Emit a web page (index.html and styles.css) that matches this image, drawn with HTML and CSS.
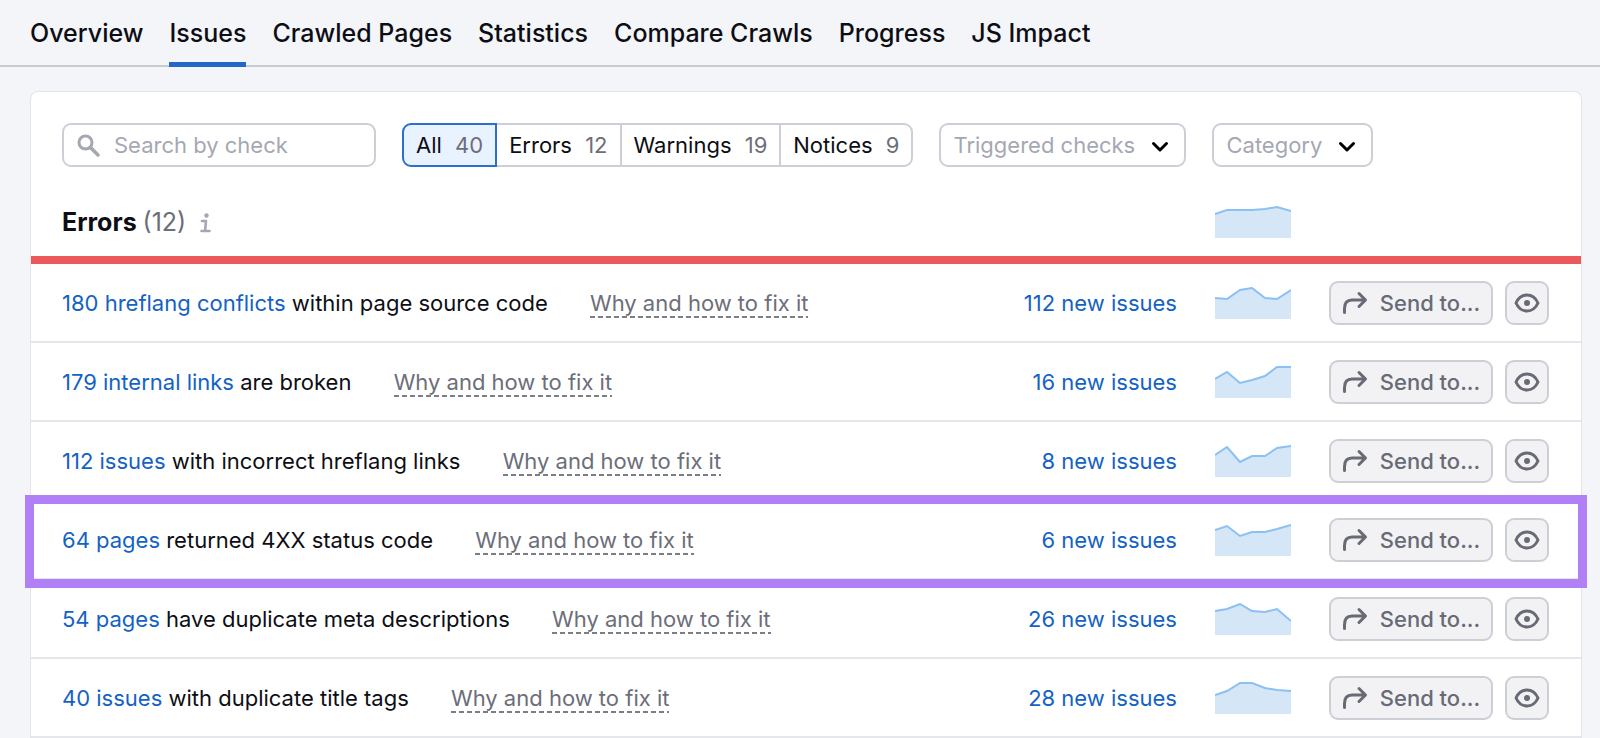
FILE: index.html
```html
<!DOCTYPE html>
<html lang="en">
<head>
    <meta charset="UTF-8">
    <meta name="viewport" content="width=device-width, initial-scale=1.0">
    <title>Site Audit: Issues</title>
    <link rel="stylesheet" href="styles.css">
</head>
<body>
    <!-- Shared icons -->
    <svg class="sprite" aria-hidden="true">
        <symbol id="icon-send" viewBox="0 0 26 24">
            <path d="M2.5 21.5V17.5C2.500 12 5 9 10 9H23M17 2.500L23.500 9L17 15.500" fill="none" stroke="currentColor" stroke-width="3" stroke-linecap="round" stroke-linejoin="round"/>
        </symbol>
        <symbol id="icon-eye" viewBox="0 0 26 20">
            <path d="M2 10C4.500 4.500 8.500 2 13 2S21.500 4.500 24 10C21.500 15.500 17.500 18 13 18S4.500 15.500 2 10Z" fill="none" stroke="currentColor" stroke-width="3" stroke-linejoin="round"/>
            <circle cx="13" cy="10" r="3" fill="currentColor"/>
        </symbol>
    </svg>

    <nav class="tabs">
        <a href="#overview">Overview</a>
        <a href="#issues" class="active">Issues</a>
        <a href="#pages">Crawled Pages</a>
        <a href="#statistics">Statistics</a>
        <a href="#compare">Compare Crawls</a>
        <a href="#progress">Progress</a>
        <a href="#js">JS Impact</a>
    </nav>

    <main class="card">
        <form class="toolbar">
            <div class="search">
                <svg width="24" height="24" viewBox="0 0 24 24" aria-hidden="true">
                    <circle cx="8.500" cy="8.500" r="6.500" fill="none" stroke="currentColor" stroke-width="3"/>
                    <path d="M14 14L21 21" stroke="currentColor" stroke-width="3.500" stroke-linecap="round"/>
                </svg>
                <input type="text" placeholder="Search by check" aria-label="Search by check">
            </div>
            <div class="filters">
                <button type="button" class="active">All <span>40</span></button>
                <button type="button">Errors <span>12</span></button>
                <button type="button">Warnings <span>19</span></button>
                <button type="button">Notices <span>9</span></button>
            </div>
            <div class="dropdown">
                <select aria-label="Triggered checks"><option>Triggered checks</option></select>
                <svg width="18" height="12" viewBox="0 0 18 12" aria-hidden="true"><path d="M2.500 2.500L9 9L15.500 2.500" fill="none" stroke="currentColor" stroke-width="3" stroke-linecap="round" stroke-linejoin="round"/></svg>
            </div>
            <div class="dropdown">
                <select aria-label="Category"><option>Category</option></select>
                <svg width="18" height="12" viewBox="0 0 18 12" aria-hidden="true"><path d="M2.500 2.500L9 9L15.500 2.500" fill="none" stroke="currentColor" stroke-width="3" stroke-linecap="round" stroke-linejoin="round"/></svg>
            </div>
        </form>

        <table class="issues">
            <thead>
                <tr>
                    <th colspan="2">
                        Errors <span class="count">(12)</span>
                        <svg class="info" width="12" height="20" viewBox="0 0 12 20" aria-hidden="true">
                            <circle cx="6.500" cy="2.500" r="2.200" fill="currentColor"/>
                            <path d="M2 8H6L5 18M1.500 18H9.500" fill="none" stroke="currentColor" stroke-width="2.600" stroke-linecap="round" stroke-linejoin="round"/>
                        </svg>
                    </th>
                    <td class="trend"><svg class="spark" width="76" height="32"><path class="area" d="M0 8L12 4L25 4L37 4L50 3L62 1L76 5V32H0Z"/><path class="line" d="M0 8L12 4L25 4L37 4L50 3L62 1L76 5"/></svg></td>
                    <td></td>
                </tr>
            </thead>
            <tbody>
                <tr>
                    <td class="issue"><a href="#">180 hreflang conflicts</a> within page source code <a href="#" class="why">Why and how to fix it</a></td>
                    <td class="new"><a href="#">112 new issues</a></td>
                    <td class="trend"><svg class="spark" width="76" height="32"><path class="area" d="M0 11L12 12L25 3L37 1L50 11L62 12L76 3V32H0Z"/><path class="line" d="M0 11L12 12L25 3L37 1L50 11L62 12L76 3"/></svg></td>
                    <td class="actions"><div><button type="button" class="btn send"><svg width="26" height="24"><use href="#icon-send"/></svg>Send to...</button><button type="button" class="btn eye" aria-label="Hide"><svg width="26" height="20"><use href="#icon-eye"/></svg></button></div></td>
                </tr>
                <tr>
                    <td class="issue"><a href="#">179 internal links</a> are broken <a href="#" class="why">Why and how to fix it</a></td>
                    <td class="new"><a href="#">16 new issues</a></td>
                    <td class="trend"><svg class="spark" width="76" height="32"><path class="area" d="M0 13L12 6L25 17L37 14L50 10L62 1L76 1V32H0Z"/><path class="line" d="M0 13L12 6L25 17L37 14L50 10L62 1L76 1"/></svg></td>
                    <td class="actions"><div><button type="button" class="btn send"><svg width="26" height="24"><use href="#icon-send"/></svg>Send to...</button><button type="button" class="btn eye" aria-label="Hide"><svg width="26" height="20"><use href="#icon-eye"/></svg></button></div></td>
                </tr>
                <tr>
                    <td class="issue"><a href="#">112 issues</a> with incorrect hreflang links <a href="#" class="why">Why and how to fix it</a></td>
                    <td class="new"><a href="#">8 new issues</a></td>
                    <td class="trend"><svg class="spark" width="76" height="32"><path class="area" d="M0 10L12 2L25 17L37 11L50 11L62 3L76 1V32H0Z"/><path class="line" d="M0 10L12 2L25 17L37 11L50 11L62 3L76 1"/></svg></td>
                    <td class="actions"><div><button type="button" class="btn send"><svg width="26" height="24"><use href="#icon-send"/></svg>Send to...</button><button type="button" class="btn eye" aria-label="Hide"><svg width="26" height="20"><use href="#icon-eye"/></svg></button></div></td>
                </tr>
                <tr class="highlight">
                    <td class="issue"><a href="#">64 pages</a> returned 4XX status code <a href="#" class="why">Why and how to fix it</a></td>
                    <td class="new"><a href="#">6 new issues</a></td>
                    <td class="trend"><svg class="spark" width="76" height="32"><path class="area" d="M0 6L12 2L25 12L37 8L50 8L62 5L76 1V32H0Z"/><path class="line" d="M0 6L12 2L25 12L37 8L50 8L62 5L76 1"/></svg></td>
                    <td class="actions"><div><button type="button" class="btn send"><svg width="26" height="24"><use href="#icon-send"/></svg>Send to...</button><button type="button" class="btn eye" aria-label="Hide"><svg width="26" height="20"><use href="#icon-eye"/></svg></button></div></td>
                </tr>
                <tr>
                    <td class="issue"><a href="#">54 pages</a> have duplicate meta descriptions <a href="#" class="why">Why and how to fix it</a></td>
                    <td class="new"><a href="#">26 new issues</a></td>
                    <td class="trend"><svg class="spark" width="76" height="32"><path class="area" d="M0 8L12 6L25 1L37 8L50 9L62 6L76 18V32H0Z"/><path class="line" d="M0 8L12 6L25 1L37 8L50 9L62 6L76 18"/></svg></td>
                    <td class="actions"><div><button type="button" class="btn send"><svg width="26" height="24"><use href="#icon-send"/></svg>Send to...</button><button type="button" class="btn eye" aria-label="Hide"><svg width="26" height="20"><use href="#icon-eye"/></svg></button></div></td>
                </tr>
                <tr>
                    <td class="issue"><a href="#">40 issues</a> with duplicate title tags <a href="#" class="why">Why and how to fix it</a></td>
                    <td class="new"><a href="#">28 new issues</a></td>
                    <td class="trend"><svg class="spark" width="76" height="32"><path class="area" d="M0 13L12 9L25 1L37 1L50 6L62 8L76 9V32H0Z"/><path class="line" d="M0 13L12 9L25 1L37 1L50 6L62 8L76 9"/></svg></td>
                    <td class="actions"><div><button type="button" class="btn send"><svg width="26" height="24"><use href="#icon-send"/></svg>Send to...</button><button type="button" class="btn eye" aria-label="Hide"><svg width="26" height="20"><use href="#icon-eye"/></svg></button></div></td>
                </tr>
            </tbody>
        </table>
    </main>
</body>
</html>
```

FILE: styles.css
```css
* {
    box-sizing: border-box;
}
body {
    margin: 0;
    background-color: #f4f5f9;
    color: #0d0e14;
    font-family: Inter, sans-serif;
    font-size: 22px;
    line-height: 28px;
}
a {
    color: #1462c4;
    text-decoration: none;
}
button, input, select {
    font: inherit;
    color: inherit;
}
.sprite {
    display: none;
}

/* Tabs */
.tabs {
    display: flex;
    gap: 26px;
    padding: 0 30px;
    border-bottom: 2px solid #c9cbd2;
}
.tabs a {
    padding: 19px 0 15px;
    margin-bottom: -2px;
    border-bottom: 5px solid transparent;
    color: #0d0e14;
    font-size: 25px;
    font-weight: 500;
}
.tabs .active {
    border-bottom-color: #2368c8;
}

/* Card */
.card {
    margin: 24px 18px 0 30px;
    border: 1px solid #e3e4ea;
    border-bottom: none;
    border-radius: 8px 8px 0 0;
    background-color: #fff;
}
.toolbar {
    display: flex;
    gap: 26px;
    padding: 31px 31px 20px;
}
.search, .dropdown {
    position: relative;
}
.search input {
    width: 314px;
    height: 44px;
    padding: 0 16px 0 50px;
    border: 2px solid #cdcfd6;
    border-radius: 9px;
    background-color: #fff;
}
.search input::placeholder {
    color: #a5a7b3;
}
.search svg {
    position: absolute;
    top: 11px;
    left: 15px;
    color: #a5a7b3;
}
.filters {
    display: flex;
}
.filters button {
    height: 44px;
    margin-left: -2px;
    padding: 0 12px;
    border: 2px solid #cdcfd6;
    background-color: #fff;
    white-space: nowrap;
}
.filters button:first-child {
    margin-left: 0;
    border-radius: 9px 0 0 9px;
}
.filters button:last-child {
    border-radius: 0 9px 9px 0;
}
.filters .active {
    z-index: 1;
    border-color: #2a70cc;
    background-color: #e9f2ff;
}
.filters span {
    margin-left: 7px;
    color: #6c6e79;
}
.dropdown select {
    height: 44px;
    padding: 0 49px 0 12px;
    border: 2px solid #cdcfd6;
    border-radius: 9px;
    appearance: none;
    background-color: #fff;
    color: #a5a7b3;
}
.dropdown svg {
    position: absolute;
    top: 18px;
    right: 17px;
    color: #000;
    pointer-events: none;
}

/* Issues table */
.issues {
    width: 100%;
    border-collapse: separate;
    border-spacing: 0;
}
.issues th, .issues td {
    padding: 0;
    text-align: left;
}
.issues thead th, .issues thead td {
    height: 77px;
    border-bottom: 8px solid #eb595b;
}
.issues thead th {
    padding-left: 31px;
    font-size: 25px;
    font-weight: 700;
}
.count {
    color: #6c6e79;
    font-weight: 400;
}
.info {
    margin-left: 8px;
    color: #a5a7b3;
    vertical-align: -2px;
}
.issues tbody td {
    height: 79px;
    border-bottom: 2px solid #e6e7ed;
    white-space: nowrap;
}
.issues tbody .issue {
    padding-left: 31px;
}
.issues tbody .new {
    padding-right: 38px;
    text-align: right;
}
.why {
    margin-left: 36px;
    padding-bottom: 2px;
    background: repeating-linear-gradient(to right, #7b7d87 0 5px, transparent 5px 8px) left bottom / 100% 2px no-repeat;
    color: #6c6e79;
}
.issues .trend {
    width: 114px;
}
.issues .actions {
    width: 252px;
}
.actions div {
    display: flex;
    gap: 12px;
}
.spark {
    display: block;
}
.spark .area {
    fill: #d5e6f6;
}
.spark .line {
    fill: none;
    stroke: #8bc0f3;
    stroke-width: 2;
}
.btn {
    display: flex;
    align-items: center;
    justify-content: center;
    height: 44px;
    padding: 0;
    border: 2px solid #cdcfd6;
    border-radius: 9px;
    background-color: #f2f2f5;
    color: #686a75;
}
.send {
    width: 164px;
    gap: 12px;
    font-weight: 500;
}
.eye {
    width: 44px;
}

/* Frame drawn over the selected row */
.highlight {
    position: relative;
}
.highlight::after {
    content: "";
    position: absolute;
    inset: -6px -6px -8px;
    border: 9px solid #b180f7;
    pointer-events: none;
}
```
